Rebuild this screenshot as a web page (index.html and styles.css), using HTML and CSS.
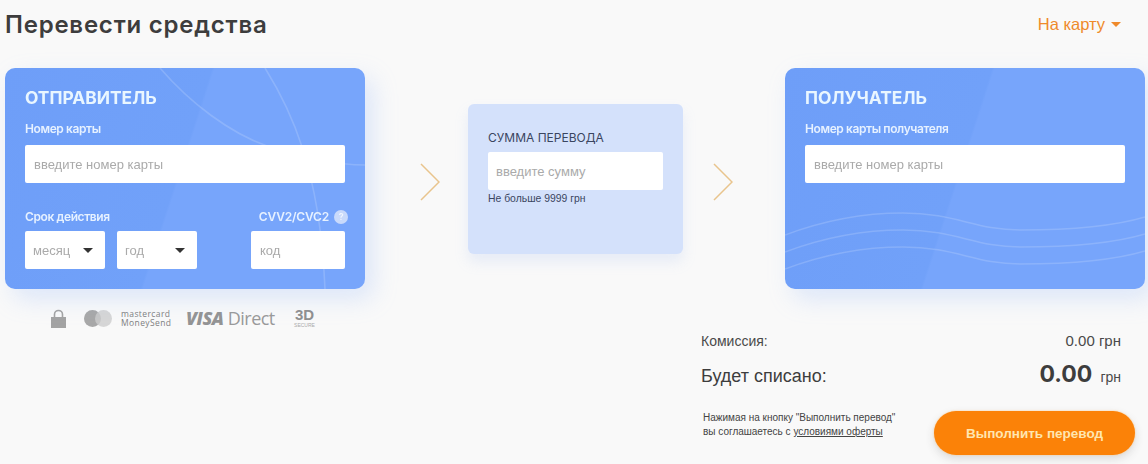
FILE: index.html
```html
<!DOCTYPE html>
<html lang="en">
<head>
  <meta charset="UTF-8" />
  <title>Перевести средства</title>
  <link rel="stylesheet" href="styles.css">
</head>
<body>

  <div class="top">
    <h1>Перевести средства</h1>
    <a class="type-link" href="#">На карту <span class="caret"></span></a>
  </div>

  <div class="transfer">
    <div class="card">
      <svg class="deco" viewBox="0 0 360 221">
        <path d="M155 0C185 35 225 65 262 78C295 89 330 97 360 97" />
        <path d="M260 0C285 40 315 100 320 221" />
      </svg>
      <div class="card-title">Отправитель</div>
      <label class="card-label">Номер карты</label>
      <input class="field" type="text" placeholder="введите номер карты" />
      <div class="expiry">
        <div class="expiry-date">
          <label class="card-label">Срок действия</label>
          <div class="selects">
            <div class="select"><span>месяц</span></div>
            <div class="select"><span>год</span></div>
          </div>
        </div>
        <div class="expiry-cvv">
          <label class="card-label cvv-label">CVV2/CVC2 <span class="help">?</span></label>
          <input class="field" type="text" placeholder="код" />
        </div>
      </div>
    </div>

    <svg class="arrow arrow-first" viewBox="0 0 20 38"><path d="M1 1L19 19L1 37" /></svg>

    <div class="amount">
      <div class="amount-title">СУММА ПЕРЕВОДА</div>
      <input class="field" type="text" placeholder="введите сумму" />
      <div class="amount-note">Не больше 9999 грн</div>
    </div>

    <svg class="arrow arrow-second" viewBox="0 0 20 38"><path d="M1 1L19 19L1 37" /></svg>

    <div class="card">
      <svg class="deco" viewBox="0 0 360 221">
        <path d="M0 167C40 152 80 145 118 145C170 145 190 162 235 162C290 162 330 158 360 149" />
        <path d="M0 184C40 169 80 162 118 162C170 162 190 179 235 179C290 179 330 175 360 166" />
        <path d="M0 201C40 186 80 179 118 179C170 179 190 196 235 196C290 196 330 192 360 183" />
      </svg>
      <div class="card-title">Получатель</div>
      <label class="card-label">Номер карты получателя</label>
      <input class="field" type="text" placeholder="введите номер карты" />
    </div>
  </div>

  <div class="bottom">
    <div class="secure">
      <svg class="lock" viewBox="0 0 15 19">
        <path class="lock-bow" d="M3.5 9V5.5a4 4 0 0 1 8 0V9" />
        <rect y="8" width="15" height="11" />
      </svg>
      <div class="mc-circles"><i></i><i></i></div>
      <div class="mc-text">mastercard<br>MoneySend</div>
      <div class="visa"><b>VISA</b> Direct</div>
      <div class="tds"><b>3D</b><span>SECURE</span></div>
    </div>

    <div class="summary">
      <div class="row row-small">
        <span>Комиссия:</span>
        <span class="row-value">0.00 грн</span>
      </div>
      <div class="row row-big">
        <span>Будет списано:</span>
        <span><b>0.00</b> <small>грн</small></span>
      </div>
      <div class="submit-row">
        <p class="terms">Нажимая на кнопку "Выполнить перевод"<br>вы соглашаетесь с <a href="#">условиями оферты</a></p>
        <button class="submit">Выполнить перевод</button>
      </div>
    </div>
  </div>

</body>
</html>
```

FILE: styles.css
```css
* { box-sizing: border-box; }

html, body { height: 100%; }

body {
  margin: 0;
  padding: 0 3px 0 5px;
  background: #f9f9f9;
  font-family: "Liberation Sans", Arial, sans-serif;
  color: #3b3b3b;
  overflow: hidden;
}

.top {
  display: flex;
  justify-content: space-between;
  align-items: center;
  height: 68px;
  padding: 0 24px 19px 0;
}

h1 {
  margin: 0;
  font-family: Inter, sans-serif;
  font-size: 24px;
  font-weight: 600;
  letter-spacing: 0.78px;
  color: #3d3d3d;
}

.type-link {
  display: flex;
  align-items: center;
  gap: 6px;
  font-size: 16.5px;
  color: #ef8a2b;
  text-decoration: none;
}

.caret {
  width: 0;
  height: 0;
  border-left: 5px solid transparent;
  border-right: 5px solid transparent;
  border-top: 5px solid #ef8a2b;
}

.transfer {
  display: flex;
  align-items: flex-start;
}

.card {
  position: relative;
  flex: none;
  width: 360px;
  height: 221px;
  padding: 20px;
  border-radius: 10px;
  overflow: hidden;
  background: linear-gradient(108deg, #6e9ef8 0%, #71a1f9 48%, #77a5fb 48.6%, #77a5fb 100%);
  filter: drop-shadow(8px 10px 12px rgba(120, 165, 250, 0.22));
}

.deco {
  position: absolute;
  top: 0;
  left: 0;
  width: 100%;
  height: 100%;
  fill: none;
  stroke: rgba(255, 255, 255, 0.16);
  stroke-width: 1.6;
}

.card-title {
  position: relative;
  margin-bottom: 15px;
  font-family: Inter, sans-serif;
  font-size: 17.4px;
  font-weight: 700;
  line-height: 19px;
  text-transform: uppercase;
  color: #e9f6ff;
}

.card-label {
  position: relative;
  display: block;
  font-family: Inter, sans-serif;
  font-size: 12px;
  font-weight: 600;
  line-height: 14px;
  letter-spacing: -0.4px;
  color: #e6f1ff;
  margin-bottom: 9px;
}

.field {
  position: relative;
  display: block;
  width: 100%;
  height: 38px;
  padding: 0 9px;
  border: 0;
  border-radius: 2px;
  background: #fff;
  font-family: "Liberation Sans", Arial, sans-serif;
  font-size: 13px;
}

.field::placeholder { color: #aaa; opacity: 1; }

.expiry {
  position: relative;
  display: flex;
  justify-content: space-between;
  margin-top: 27px;
}

.expiry-date .card-label { margin-bottom: 7px; }

.selects {
  display: flex;
  gap: 12px;
}

.select {
  position: relative;
  display: flex;
  align-items: center;
  width: 80px;
  height: 38px;
  padding: 0 8px;
  border-radius: 2px;
  background: #fff;
  font-size: 13px;
  color: #aaa;
}

.select::after {
  content: "";
  position: absolute;
  top: 17px;
  right: 12px;
  border-left: 5.5px solid transparent;
  border-right: 5.5px solid transparent;
  border-top: 5px solid #333;
}

.expiry-cvv { width: 94px; }

.cvv-label {
  display: flex;
  justify-content: flex-end;
  align-items: center;
  gap: 5px;
  margin: 0 -3px 7px -30px;
  letter-spacing: -0.2px;
  white-space: nowrap;
}

.help {
  width: 14px;
  height: 14px;
  border-radius: 50%;
  background: #c9dafb;
  font-size: 9px;
  line-height: 14px;
  text-align: center;
  color: #f0f5ff;
}

.arrow {
  flex: none;
  width: 20px;
  height: 38px;
  margin-top: 95px;
  fill: none;
  stroke: #e9c48d;
  stroke-width: 1.5;
}

.arrow-first { margin-left: 55px; margin-right: 28px; }
.arrow-second { margin-left: 30px; margin-right: 52px; }

.amount {
  flex: none;
  width: 215px;
  height: 150px;
  margin-top: 36px;
  padding: 26px 20px 0;
  border-radius: 6px;
  background: #d4e1fb;
  box-shadow: 0 8px 14px rgba(150, 180, 240, 0.18);
}

.amount-title {
  margin-bottom: 7px;
  font-family: Inter, sans-serif;
  font-size: 12px;
  line-height: 15px;
  color: #3a4560;
}

.amount .field { padding: 0 8px; }

.amount-note {
  margin-top: 2px;
  font-size: 10.4px;
  line-height: 13px;
  color: #3a4560;
}

.bottom {
  display: flex;
  justify-content: space-between;
  align-items: flex-start;
}

.secure {
  display: flex;
  align-items: center;
  width: 360px;
  height: 24px;
  margin-top: 17px;
  padding-left: 46px;
  color: #9b9b9b;
}

.lock {
  flex: none;
  width: 15px;
  height: 19px;
  margin-right: 18px;
  fill: #a3a3a3;
}

.lock-bow {
  fill: none;
  stroke: #a3a3a3;
  stroke-width: 1.6;
}

.mc-circles {
  display: flex;
  margin-right: 9px;
}

.mc-circles i {
  width: 17px;
  height: 17px;
  border-radius: 50%;
  background: #a8a8a8;
}

.mc-circles i + i {
  margin-left: -6px;
  background: rgba(205, 205, 205, 0.8);
}

.mc-text {
  width: 65px;
  font-family: "Open Sans", sans-serif;
  font-size: 8.5px;
  line-height: 9px;
  letter-spacing: 0.4px;
  color: #7f7f7f;
}

.visa {
  width: 107px;
  font-size: 18px;
  white-space: nowrap;
  color: #9a9a9a;
  font-family: "Open Sans", sans-serif;
  letter-spacing: -0.5px;
}

.visa b {
  font-style: italic;
  font-weight: 800;
  color: #949494;
}

.tds {
  display: flex;
  flex-direction: column;
  align-items: center;
  width: 23px;
  line-height: 1;
}

.tds b {
  font-size: 15px;
  line-height: 14px;
  color: #8f8f8f;
}

.tds span {
  font-size: 5px;
  line-height: 6px;
  color: #aaa;
}

.summary {
  width: 434px;
  margin-top: 42px;
  margin-right: 10px;
}

.row {
  display: flex;
  justify-content: space-between;
  align-items: baseline;
  padding: 0 14px 0 0;
}

.row-small {
  font-size: 14px;
  line-height: 20px;
  color: #4a4a4a;
}

.row-value { font-size: 15px; }

.row-big {
  margin-top: 6px;
  font-size: 18px;
  line-height: 34px;
  color: #3d3d3d;
}

.row-big b {
  font-family: Inter, sans-serif;
  font-size: 23px;
  font-weight: 700;
}

.row-big small {
  margin-left: 3px;
  font-size: 14px;
  color: #4a4a4a;
}

.submit-row {
  display: flex;
  justify-content: space-between;
  margin-top: 17px;
}

.terms {
  margin: 0 0 0 2px;
  font-size: 10px;
  line-height: 14px;
  color: #444;
}

.terms a { color: #444; }

.submit {
  width: 201px;
  height: 44px;
  border: 0;
  border-radius: 22px;
  background: #fb8208;
  box-shadow: 0 0 2px #ffc98a, 0 4px 10px rgba(60, 60, 60, 0.16);
  font-family: "Liberation Sans", Arial, sans-serif;
  font-size: 13.5px;
  font-weight: 700;
  color: #ffe6b0;
}
```
